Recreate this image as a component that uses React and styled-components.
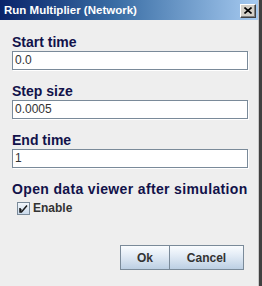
import React from "react";
import styled, { createGlobalStyle } from "styled-components";

const Global = createGlobalStyle`
  html, body { margin: 0; padding: 0; background: #eeeeee; }
  body { font-family: "Liberation Sans", Arial, sans-serif; }
`;

const Frame = styled.div`
  width: 262px;
  height: 286px;
  box-sizing: border-box;
  border-right: 3px solid #404040;
  display: flex;
  flex-direction: column;
  background: #eeeeee;
  overflow: hidden;
`;

const TitleBar = styled.div`
  height: 20px;
  flex: none;
  display: flex;
  align-items: center;
  justify-content: space-between;
  padding: 0 2px 0 4px;
  background: linear-gradient(to right, #0a246a 0%, #3a6ea5 45%, #a6caf0 100%);
  border-right: 1px solid #c0c0c0;
`;

const TitleText = styled.span`
  color: #ffffff;
  font-weight: bold;
  font-size: 11.5px;
  line-height: 20px;
  white-space: nowrap;
`;

const CloseButton = styled.div`
  width: 16px;
  height: 14px;
  box-sizing: border-box;
  margin-top: 1px;
  background: #d4d0c8;
  border-top: 1px solid #ffffff;
  border-left: 1px solid #ffffff;
  border-right: 1px solid #404040;
  border-bottom: 1px solid #404040;
  box-shadow: inset -1px -1px 0 #808080;
  display: flex;
  align-items: center;
  justify-content: center;
`;

const Body = styled.div`
  flex: 1;
  display: flex;
  flex-direction: column;
  padding: 14px 10px 0 12px;
  border-right: 1px solid #c8c8c8;
`;

const Field = styled.div`
  display: flex;
  flex-direction: column;
  gap: 1px;
  margin-bottom: 13px;
`;

const Label = styled.div`
  color: #12124a;
  font-weight: bold;
  font-size: 14px;
  line-height: 16px;
  letter-spacing: ${(p) => p.$spacing || "0px"};
  white-space: nowrap;
`;

const Input = styled.div`
  height: 19px;
  box-sizing: border-box;
  border: 1px solid #7a8a99;
  box-shadow: 1px 1px 0 #ffffff;
  background: #ffffff;
  color: #333333;
  font-size: 12px;
  line-height: 17px;
  padding-left: 2px;
`;

const CheckRow = styled.label`
  display: flex;
  align-items: center;
  gap: 3px;
  margin: 4px 0 0 5px;
  color: #333333;
  font-weight: bold;
  font-size: 12px;
  line-height: 14px;
`;

const Buttons = styled.div`
  display: flex;
  justify-content: flex-end;
  margin-top: 30px;
  padding-right: 4px;
`;

const Button = styled.div`
  height: 25px;
  box-sizing: border-box;
  width: ${(p) => p.$w}px;
  border: 1px solid #7a8a99;
  margin-left: ${(p) => (p.$joined ? "-1px" : "0")};
  background: linear-gradient(to bottom, #fafcfe 0%, #e6eef7 35%, #d3e0ee 65%, #bccfe3 100%);
  color: #333333;
  font-weight: bold;
  font-size: 12px;
  display: flex;
  align-items: center;
  justify-content: center;
`;

function CheckBox() {
  return (
    <svg width="13" height="13" viewBox="0 0 13 13">
      <defs>
        <linearGradient id="cbg" x1="0" y1="0" x2="0" y2="1">
          <stop offset="0" stopColor="#f4f8fc" />
          <stop offset="1" stopColor="#c8d8ea" />
        </linearGradient>
      </defs>
      <rect x="0.5" y="0.5" width="12" height="12" fill="url(#cbg)" stroke="#7a8a99" />
      <path d="M3 6 L3 10 L4.5 10 L10 3.5" fill="none" stroke="#1a1a1a" strokeWidth="1.5" />
      <path d="M3.8 7 L3.8 9.5" stroke="#1a1a1a" strokeWidth="1.5" />
    </svg>
  );
}

function CloseGlyph() {
  return (
    <svg width="8" height="7" viewBox="0 0 8 7">
      <path d="M0.5 0.5 L7.5 6.5 M7.5 0.5 L0.5 6.5" stroke="#000" strokeWidth="1.6" />
    </svg>
  );
}

export default function App() {
  return (
    <>
      <Global />
      <Frame>
        <TitleBar>
          <TitleText>Run Multiplier (Network)</TitleText>
          <CloseButton>
            <CloseGlyph />
          </CloseButton>
        </TitleBar>
        <Body>
          <Field>
            <Label>Start time</Label>
            <Input>0.0</Input>
          </Field>
          <Field>
            <Label>Step size</Label>
            <Input>0.0005</Input>
          </Field>
          <Field>
            <Label>End time</Label>
            <Input>1</Input>
          </Field>
          <Label $spacing="0.35px">Open data viewer after simulation</Label>
          <CheckRow>
            <CheckBox />
            Enable
          </CheckRow>
          <Buttons>
            <Button $w={50}>Ok</Button>
            <Button $w={75} $joined>Cancel</Button>
          </Buttons>
        </Body>
      </Frame>
    </>
  );
}
